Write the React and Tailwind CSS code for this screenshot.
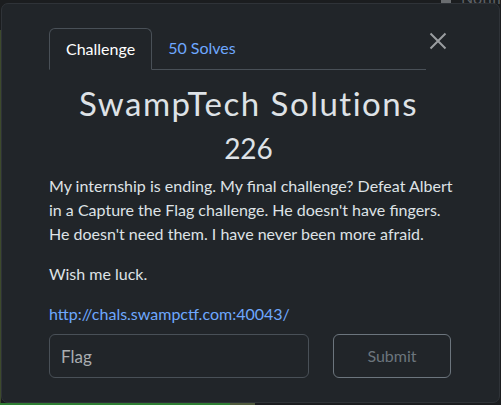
import React from 'react';

const Challenge = () => {
  return (
    <div className="w-[501px] h-[405px] overflow-hidden bg-[#1b1d1f] font-['Lato','Liberation_Sans',sans-serif]">
      {/* page peeking out behind the modal */}
      <div className="relative h-[405px]">
        <div className="absolute top-[-9px] right-0 flex items-center gap-[10px] text-[16px] leading-[14px] text-[#5f6266]">
          <span className="inline-block w-[10px] h-[4px] mt-[8px] bg-[#6a6d70]" />
          <span>Notifi</span>
        </div>
        <div className="absolute left-0 top-[30px] bottom-0 w-[1px] bg-[#3d4a2c]" />
        <div className="absolute bottom-0 left-0 h-[2px] w-[230px] bg-[#2e7d32]" />
        <div className="absolute bottom-0 left-[230px] h-[2px] w-[25px] bg-[#4f5a3c]" />

        {/* modal */}
        <div className="absolute left-[1px] top-[3px] w-[499px] h-[400px] rounded-[7px] border border-[#2f3338] bg-[#212529] text-[#dee2e6]">
          <div className="pl-[47px] pr-[48px] pt-[24px]">
            <div className="flex items-start">
              <div className="flex flex-1 border-b border-[#495057]">
                <div className="-mb-px rounded-t-[6px] border border-[#495057] border-b-[#212529] bg-[#212529] px-[16px] py-[8px] text-[16px] leading-[24px] text-white">
                  Challenge
                </div>
                <div className="px-[16px] py-[8px] text-[16px] leading-[24px] text-[#6ea8fe]">
                  50 Solves
                </div>
              </div>
              <button className="ml-[2px] mr-[3px] mt-[4px] flex h-[18px] w-[20px] items-center justify-center">
                <svg width="18" height="18" viewBox="0 0 18 18" fill="none" stroke="#9a9da0" strokeWidth="2">
                  <path d="M1.5 1.5L16.5 16.5M16.5 1.5L1.5 16.5" />
                </svg>
              </button>
            </div>

            <h2 className="mt-[14px] pr-[3px] text-center text-[33px] leading-[38px] tracking-[1.5px] text-[#dee2e6]">
              SwampTech Solutions
            </h2>
            <h3 className="mt-[9px] pr-[3px] text-center text-[28px] leading-[34px] text-[#dee2e6]">226</h3>

            <div className="mt-[9px] mr-[-10px] text-[16px] leading-[24px] text-[#dee2e6]">
              <p className="mb-[16px]">
                My internship is ending. My final challenge? Defeat Albert in a Capture the Flag challenge. He
                doesn't have fingers. He doesn't need them. I have never been more afraid.
              </p>
              <p className="mb-[16px]">Wish me luck.</p>
              <p className="mb-[8px]">
                <a className="text-[#6ea8fe]">http://chals.swampctf.com:40043/</a>
              </p>
            </div>

            <div className="flex gap-[24px]">
              <input
                className="h-[44px] w-[260px] shrink-0 rounded-[6px] border border-[#495057] bg-[#212529] px-[11px] text-[17px] text-[#dee2e6] placeholder:text-[#a9adb1] outline-none"
                placeholder="Flag"
              />
              <button
                disabled
                className="h-[44px] w-[118px] shrink-0 rounded-[6px] border border-[#6c757d] text-[16px] text-[#6c757d]"
              >
                Submit
              </button>
            </div>
          </div>
        </div>
      </div>
    </div>
  );
};

export default function App() {
  return <Challenge />;
}
